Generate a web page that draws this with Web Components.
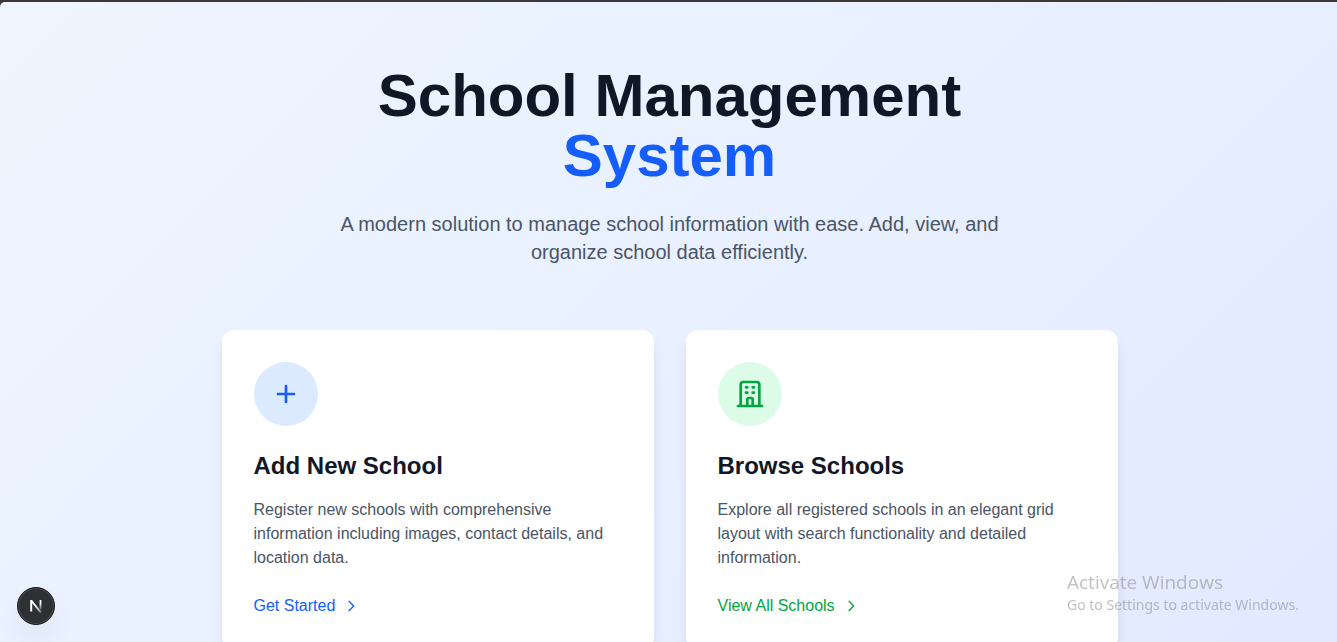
<!DOCTYPE html>
<html lang="en">
<head>
<meta charset="utf-8">
<meta name="viewport" content="width=device-width, initial-scale=1">
<title>School Management System</title>
<style>
  body { margin: 0; background: #3b3838; font-family: "Liberation Sans", Arial, sans-serif; color: #101828; }
</style>
</head>
<body>
<school-home>
  <page-hero>
    School Management
    <span slot="accent">System</span>
    <span slot="lead">A modern solution to manage school information with ease. Add, view, and organize school data efficiently.</span>
  </page-hero>
  <action-card slot="cards" tone="blue" href="#add" label="Get Started">
    <svg slot="icon" width="32" height="32" viewBox="0 0 24 24" fill="none" stroke="currentColor" stroke-width="2" stroke-linecap="round" stroke-linejoin="round" aria-hidden="true"><path d="M12 6v6m0 0v6m0-6h6m-6 0H6"/></svg>
    <span slot="title">Add New School</span>
    Register new schools with comprehensive information including images, contact details, and location data.
  </action-card>
  <action-card slot="cards" tone="green" href="#schools" label="View All Schools">
    <svg slot="icon" width="32" height="32" viewBox="0 0 24 24" fill="none" stroke="currentColor" stroke-width="2" stroke-linecap="round" stroke-linejoin="round" aria-hidden="true"><path d="M19 21V5a2 2 0 00-2-2H7a2 2 0 00-2 2v16m14 0h2m-2 0h-5m-9 0H3m2 0h5M9 7h1m-1 4h1m4-4h1m-1 4h1m-5 10v-5a1 1 0 011-1h2a1 1 0 011 1v5m-4 0h4"/></svg>
    <span slot="title">Browse Schools</span>
    Explore all registered schools in an elegant grid layout with search functionality and detailed information.
  </action-card>
</school-home>
<dev-badge></dev-badge>
<activation-notice>
  Activate Windows
  <span slot="detail">Go to Settings to activate Windows.</span>
</activation-notice>

<script>
  const define = (name, html, setup) => {
    const template = document.createElement('template');
    template.innerHTML = html;
    customElements.define(name, class extends HTMLElement {
      constructor() {
        super();
        this.attachShadow({ mode: 'open' }).append(template.content.cloneNode(true));
      }
      connectedCallback() { if (setup) setup(this, this.shadowRoot); }
    });
  };

  define('school-home', `
    <style>
      :host { display: block; border-top: 2px solid #3b3838; }
      main { box-sizing: border-box; min-height: 100vh; padding: 64px 32px 64px 34px; border-top-left-radius: 5px;
             background: linear-gradient(135deg, #eff6ff, #e0e7ff 118%); }
      .cards { display: grid; grid-template-columns: repeat(2, minmax(0, 1fr)); gap: 32px; max-width: 896px; margin: 64px auto 0; }
      @media (max-width: 767px) { .cards { grid-template-columns: minmax(0, 1fr); } }
    </style>
    <main><slot></slot><div class="cards"><slot name="cards"></slot></div></main>`);

  define('page-hero', `
    <style>
      :host { display: block; max-width: 896px; margin: 0 auto; text-align: center; }
      h1 { margin: 0 0 24px; font-size: 60px; line-height: 60px; font-weight: 700; }
      .accent { display: block; color: #155dfc; }
      p { max-width: 672px; margin: 0 auto; font-size: 20px; line-height: 28px; color: #4a5565; }
    </style>
    <h1><slot></slot><span class="accent"><slot name="accent"></slot></span></h1>
    <p><slot name="lead"></slot></p>`);

  define('action-card', `
    <style>
      :host { display: block; padding: 32px; border-radius: 12px; background: #fff;
              box-shadow: 0 10px 15px -3px rgb(0 0 0 / .1), 0 4px 6px -4px rgb(0 0 0 / .1);
              --ink: #155dfc; --tint: #dbeafe; }
      :host([tone="green"]) { --ink: #00a63e; --tint: #dcfce7; }
      .icon { display: flex; align-items: center; justify-content: center; width: 64px; height: 64px;
              border-radius: 50%; background: var(--tint); color: var(--ink); }
      h2 { margin: 24px 0 16px; font-size: 24px; line-height: 32px; font-weight: 700; }
      p { margin: 0 0 24px; font-size: 16px; line-height: 24px; color: #4a5565; }
      a { display: flex; align-items: center; gap: 8px; width: fit-content; font-size: 16px; line-height: 24px; color: var(--ink); text-decoration: none; }
    </style>
    <div class="icon"><slot name="icon"></slot></div>
    <h2><slot name="title"></slot></h2>
    <p><slot></slot></p>
    <a><span class="label"></span><svg width="16" height="16" viewBox="0 0 24 24" fill="none" stroke="currentColor" stroke-width="2" stroke-linecap="round" stroke-linejoin="round" aria-hidden="true"><path d="M9 5l7 7-7 7"/></svg></a>`,
    (host, root) => {
      root.querySelector('a').href = host.getAttribute('href');
      root.querySelector('.label').textContent = host.getAttribute('label');
    });

  define('dev-badge', `
    <style>
      :host { position: fixed; left: 17px; bottom: 17px; }
      button { display: flex; align-items: center; justify-content: center; box-sizing: border-box; width: 38px; height: 38px;
               padding: 0; border: 1px solid #171717; border-radius: 50%; background: #2e3033;
               box-shadow: inset 0 0 0 1px #4c4e50, 0 16px 32px -8px rgb(0 0 0 / .14); }
    </style>
    <button type="button" aria-label="Open developer tools">
      <svg width="36" height="36" viewBox="0 0 36 36" fill="none" aria-hidden="true">
        <defs>
          <linearGradient id="stem" gradientUnits="userSpaceOnUse" x1="0" y1="12" x2="0" y2="23"><stop offset=".3" stop-color="#fff"/><stop offset="1" stop-color="#fff" stop-opacity="0"/></linearGradient>
          <linearGradient id="slant" gradientUnits="userSpaceOnUse" x1="18" y1="18" x2="24" y2="25"><stop stop-color="#fff"/><stop offset="1" stop-color="#fff" stop-opacity=".3"/></linearGradient>
        </defs>
        <path d="M22.500 12v10" stroke="url(#stem)" stroke-width="1.800"/>
        <path d="M13.200 12.500L22.800 24.500" stroke="url(#slant)" stroke-width="2"/>
        <path d="M13.200 23.500V12" stroke="#fff" stroke-width="2"/>
      </svg>
    </button>`);

  define('activation-notice', `
    <style>
      :host { position: fixed; right: 34px; bottom: 26px; width: 236px; pointer-events: none; white-space: nowrap;
              font-family: "Open Sans", "Noto Sans", sans-serif; color: rgb(130 130 130 / .5); }
      div { font-size: 19px; line-height: 24px; }
      small { display: block; font-family: "Noto Sans", sans-serif; font-size: 14px; line-height: 22px; }
    </style>
    <div><slot></slot></div><small><slot name="detail"></slot></small>`);
</script>
</body>
</html>
